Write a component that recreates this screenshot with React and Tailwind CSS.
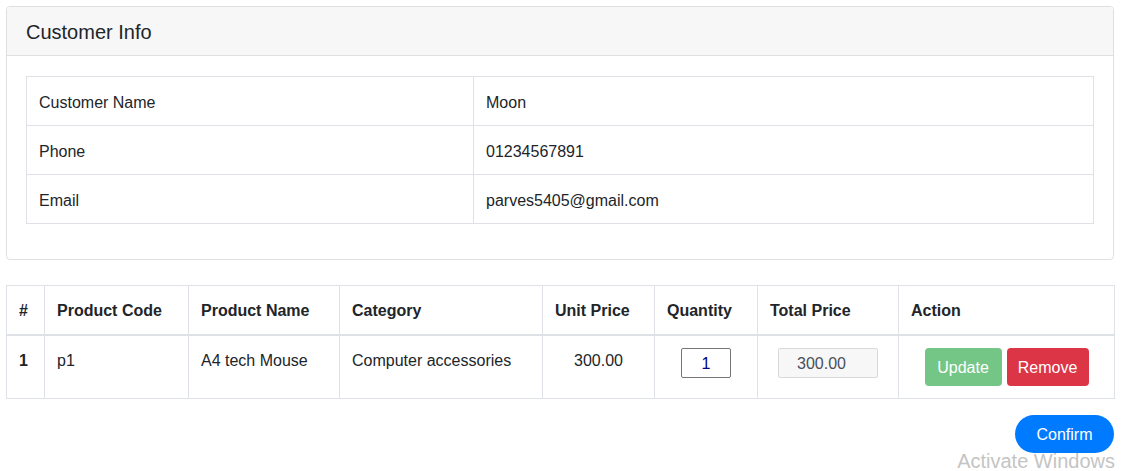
import React, { useState } from "react";

const customer = [
  { label: "Customer Name", value: "Moon" },
  { label: "Phone", value: "01234567891" },
  { label: "Email", value: "parves5405@gmail.com" },
];

const columns = [
  { name: "#", w: "w-[38px]" },
  { name: "Product Code", w: "w-[144px]" },
  { name: "Product Name", w: "w-[151px]" },
  { name: "Category", w: "w-[203px]" },
  { name: "Unit Price", w: "w-[112px]" },
  { name: "Quantity", w: "w-[103px]" },
  { name: "Total Price", w: "w-[141px]" },
  { name: "Action", w: "w-[216px]" },
];

const App = () => {
  const [qty, setQty] = useState(1);
  const unitPrice = 300;

  return (
    <div
      className="relative h-[471px] overflow-hidden bg-white text-[#212529] text-[16px] leading-[24px] px-[6px] pt-[6px]"
      style={{ fontFamily: '"Segoe UI", "Liberation Sans", Arial, sans-serif' }}
    >
      <div className="w-[1108px]">
        {/* customer card */}
        <div className="border border-[#dfdfdf] rounded-[4px] overflow-hidden">
          <div className="bg-[#f7f7f7] border-b border-[#dfdfdf] px-[19px] pt-[13px] pb-[11px]">
            <h5 className="text-[20px] leading-[24px] font-medium">Customer Info</h5>
          </div>
          <div className="px-[19px] pt-[20px] pb-[35px]">
            <table className="w-full table-fixed border-collapse">
              <tbody>
                {customer.map((row) => (
                  <tr key={row.label}>
                    <td className="w-[447px] border border-[#dee2e6] px-[12px] pt-[14px] pb-[10px]">
                      {row.label}
                    </td>
                    <td className="border border-[#dee2e6] px-[12px] pt-[14px] pb-[10px]">
                      {row.value}
                    </td>
                  </tr>
                ))}
              </tbody>
            </table>
          </div>
        </div>

        {/* cart table */}
        <table className="mt-[25px] w-full table-fixed border-collapse">
          <thead>
            <tr>
              {columns.map((c) => (
                <th
                  key={c.name}
                  className={`${c.w} text-left font-bold border border-[#dee2e6] border-b-2 px-[12px] pt-[13px] pb-[11px]`}
                >
                  {c.name}
                </th>
              ))}
            </tr>
          </thead>
          <tbody>
            <tr>
              <td className="border border-[#dee2e6] px-[12px] pt-[13px] pb-[11px] align-top font-bold">1</td>
              <td className="border border-[#dee2e6] px-[12px] pt-[13px] pb-[11px] align-top">p1</td>
              <td className="border border-[#dee2e6] px-[12px] pt-[13px] pb-[11px] align-top">A4 tech Mouse</td>
              <td className="border border-[#dee2e6] px-[12px] pt-[13px] pb-[11px] align-top">Computer accessories</td>
              <td className="border border-[#dee2e6] px-[12px] pt-[13px] pb-[11px] align-top text-center">
                {unitPrice.toFixed(2)}
              </td>
              <td className="border border-[#dee2e6] px-[12px] py-[12px] align-top text-center">
                <input
                  type="text"
                  value={qty}
                  onChange={(e) => setQty(e.target.value)}
                  className="w-[50px] h-[30px] border border-[#767676] rounded-[2px] text-center text-[#000080] pt-[2px] outline-none"
                />
              </td>
              <td className="border border-[#dee2e6] px-[12px] py-[12px] align-top text-center">
                <input
                  type="text"
                  readOnly
                  value={(unitPrice * (Number(qty) || 0)).toFixed(2)}
                  className="w-[100px] h-[30px] bg-[#f7f7f7] border border-[#dadada] rounded-[2px] pl-[18px] pt-[2px] text-[#495057] outline-none"
                />
              </td>
              <td className="border border-[#dee2e6] px-[12px] py-[12px] align-top">
                <div className="flex justify-center gap-[5px]">
                  <button
                    disabled
                    className="h-[38px] w-[77px] rounded-[4px] bg-[#74c687] text-white pt-[2px]"
                  >
                    Update
                  </button>
                  <button className="h-[38px] w-[82px] rounded-[4px] bg-[#dc3545] text-white pt-[2px]">
                    Remove
                  </button>
                </div>
              </td>
            </tr>
          </tbody>
        </table>

        <div className="flex justify-end mt-[16px]">
          <button className="h-[38px] w-[99px] rounded-full bg-[#007bff] text-white pt-[2px]">
            Confirm
          </button>
        </div>
      </div>

      <div className="absolute right-[8px] bottom-[-2px] text-[20px] leading-[24px] text-[#c4c4c4] pointer-events-none">
        Activate Windows
      </div>
    </div>
  );
};

export default App;
